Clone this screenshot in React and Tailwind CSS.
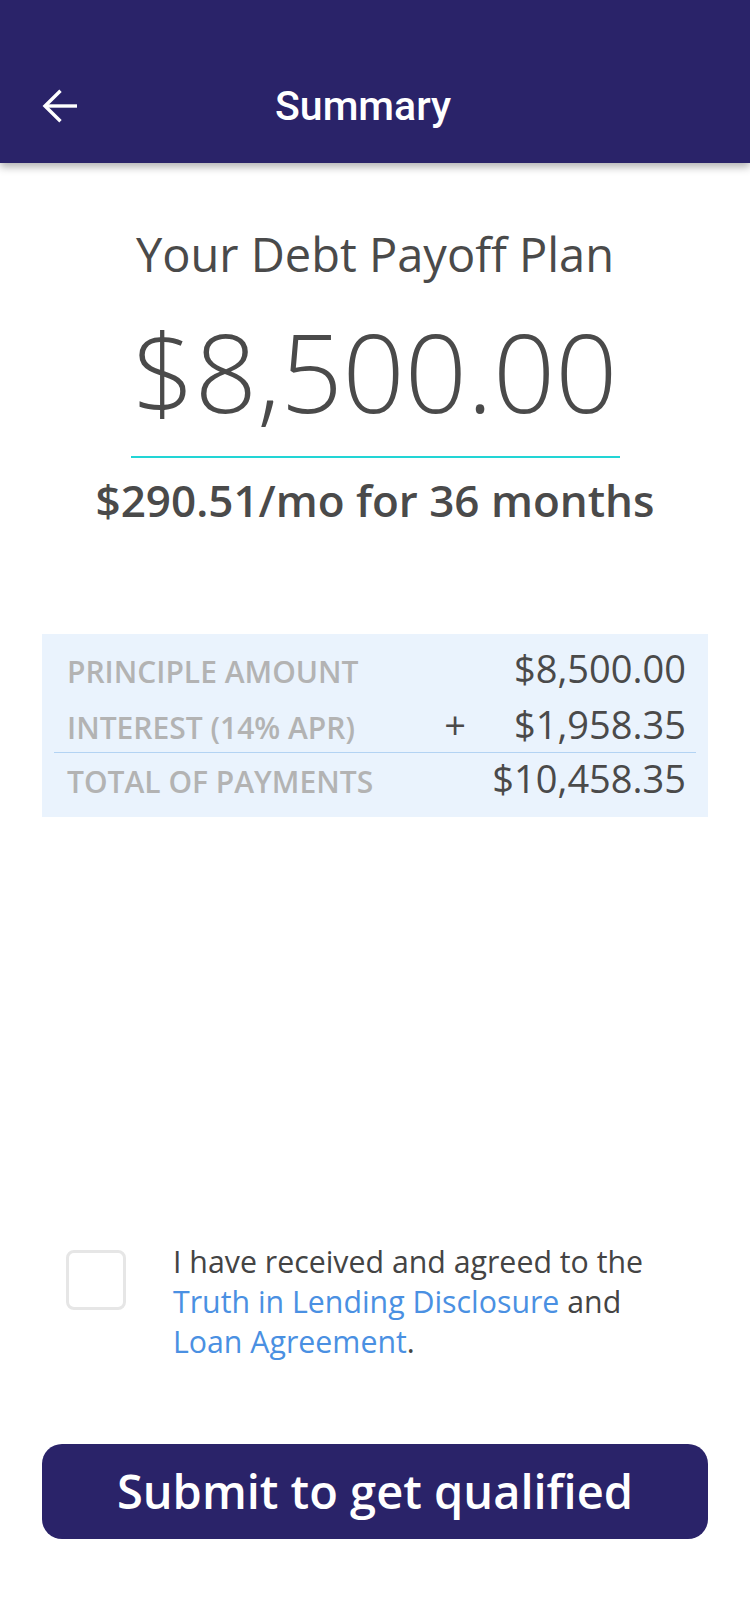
import React from "react";

const rows = [
  { label: "PRINCIPLE AMOUNT", value: "$8,500.00" },
  { label: "INTEREST (14% APR)", value: "$1,958.35", sign: "+" },
];

function BackArrow() {
  return (
    <svg width="36" height="34" viewBox="0 0 36 34" fill="none" stroke="white" strokeWidth="3.4">
      <path d="M35 17H3" />
      <path d="M18.5 1.8L3 17l15.5 15.2" />
    </svg>
  );
}

export default function App() {
  return (
    <div className="min-h-[1624px] bg-white font-['Open_Sans',sans-serif] text-[#4a4a4a]">
      <header className="relative z-10 h-[163px] bg-[#2a2369] pt-[48px] shadow-[0_4px_8px_rgba(0,0,0,0.3)]">
        <div className="flex h-[115px] items-center pl-[42px]">
          <button className="flex h-[34px] w-[36px] items-center">
            <BackArrow />
          </button>
          <h1 className="ml-[197px] font-['Roboto',sans-serif] text-[41px] font-medium leading-[48px] text-white">
            Summary
          </h1>
        </div>
      </header>

      <main>
        <h2 className="mt-[63px] text-center text-[47px] leading-[56px]">Your Debt Payoff Plan</h2>

        <div className="mx-auto mt-[28px] w-[489px] border-b-2 border-[#22d5d5] pb-[24px] text-center text-[109px] font-light leading-[122px]">
          $8,500.00
        </div>

        <p className="mt-[16px] text-center text-[44px] font-semibold leading-[52px]">$290.51/mo for 36 months</p>

        <section className="mx-[42px] mt-[108px] bg-[#eaf3fd] pb-[12px] pt-[6px]">
          {rows.map((row) => (
            <div key={row.label} className="flex h-[56px] items-baseline justify-between pl-[25px] pr-[22px] leading-[56px]">
              <span className="text-[30px] font-semibold text-[#b3b3b3]">{row.label}</span>
              <span className="flex items-baseline gap-[48px] text-[38px]">
                {row.sign && <span>{row.sign}</span>}
                <span>{row.value}</span>
              </span>
            </div>
          ))}
          <div className="mx-[12px] h-px bg-[#b3d3f3]" />
          <div className="flex h-[52px] items-baseline justify-between pl-[25px] pr-[22px] leading-[50px]">
            <span className="text-[30px] font-semibold text-[#b3b3b3]">TOTAL OF PAYMENTS</span>
            <span className="text-[38px]">$10,458.35</span>
          </div>
        </section>

        <div className="mt-[425px] flex gap-[47px] pl-[66px]">
          <div className="mt-[8px] h-[60px] w-[60px] shrink-0 rounded-[8px] border-[3px] border-[#e6e6e6]" />
          <p className="w-[490px] text-[30.3px] leading-[40px] text-[#444]">
            I have received and agreed to the{" "}
            <a className="text-[#4a90e2]">Truth in Lending Disclosure</a> and{" "}
            <a className="text-[#4a90e2]">Loan Agreement</a>.
          </p>
        </div>

        <button className="mx-[42px] mt-[82px] flex h-[95px] w-[666px] items-center justify-center rounded-[20px] bg-[#2a2369] text-[47px] font-semibold text-white">
          Submit to get qualified
        </button>
      </main>
    </div>
  );
}
